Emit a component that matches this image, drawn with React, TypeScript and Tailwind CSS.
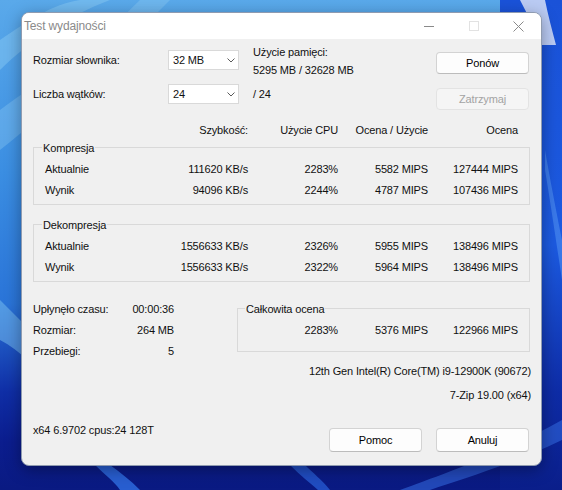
import React from "react";

const Chevron = () => (
  <svg width="8" height="5" viewBox="0 0 8 5">
    <path d="M0.5 0.5 L4 4 L7.5 0.5" fill="none" stroke="#5a5a5a" strokeWidth="1" />
  </svg>
);

function Combo({ value }: { value: string }) {
  return (
    <div className="w-[71px] h-[20px] bg-white border border-[#d9d9d9] flex items-center justify-between pl-[4px] pr-[3px]">
      <span className="leading-[18px]">{value}</span>
      <Chevron />
    </div>
  );
}

function Btn({ children, disabled, tall }: { children: React.ReactNode; disabled?: boolean; tall?: boolean }) {
  return (
    <div
      className={
        "w-[93px] rounded-[4px] border flex items-center justify-center " +
        (tall ? "h-[24px] " : "h-[22px] ") +
        (disabled
          ? "border-[#e3e3e3] bg-[#f5f5f5] text-[#a3a3a3]"
          : "border-[#d3d3d3] border-b-[#bcbcbc] bg-[#fdfdfd] text-black")
      }
    >
      {children}
    </div>
  );
}

function Row({ label, vals }: { label: string; vals: string[] }) {
  return (
    <div className="flex h-[21px] items-center pl-[11px] leading-[18px]">
      <span className="w-[113px]">{label}</span>
      {vals.map((v, i) => (
        <span key={i} className="w-[90px] text-right">
          {v}
        </span>
      ))}
    </div>
  );
}

function Group({ title, children }: { title: string; children: React.ReactNode }) {
  return (
    <div className="relative border border-[#d9d9d9] pt-[10px] pb-[4px]">
      <span className="absolute left-[8px] -top-[7px] px-[1px] bg-[#f0f0f0] leading-[14px]">{title}</span>
      {children}
    </div>
  );
}

function Wallpaper() {
  return (
    <svg className="absolute inset-0" width="562" height="490" viewBox="0 0 562 490">
      <defs>
        <linearGradient id="bgv" x1="0" y1="0" x2="0" y2="1">
          <stop offset="0" stopColor="#5aa9ea" />
          <stop offset="0.35" stopColor="#3b8ee2" />
          <stop offset="0.62" stopColor="#2a74d8" />
          <stop offset="0.8" stopColor="#0f2ea6" />
          <stop offset="0.9" stopColor="#0b1d8e" />
          <stop offset="1" stopColor="#0a1a82" />
        </linearGradient>
        <linearGradient id="rgt" x1="0" y1="0" x2="0" y2="1">
          <stop offset="0" stopColor="#1a52d8" />
          <stop offset="0.5" stopColor="#1c5ae0" />
          <stop offset="0.8" stopColor="#0e2ca6" />
          <stop offset="1" stopColor="#0a1e8a" />
        </linearGradient>
      </defs>
      <rect width="562" height="490" fill="url(#bgv)" />
      <rect x="500" width="62" height="490" fill="url(#rgt)" />
      <path d="M0 40 C 30 20, 50 5, 80 0 L 110 0 C 70 15, 30 40, 0 70 Z" fill="#8ccbf3" opacity="0.45" />
      <path d="M0 110 C 40 80, 80 60, 140 0 L 170 0 C 110 60, 50 110, 0 150 Z" fill="#9ad4f6" opacity="0.3" />
      <path d="M0 300 C 20 320, 40 340, 60 360 L 60 400 C 40 370, 20 350, 0 340 Z" fill="#7cc2f0" opacity="0.5" />
      <path d="M520 0 L 545 0 C 548 15, 552 30, 556 45 L 540 45 C 535 30, 528 15, 520 0 Z" fill="#ffffff" opacity="0.7" />
      <path d="M545 150 C 552 190, 558 220, 562 240 L 562 280 C 556 240, 550 200, 545 170 Z" fill="#4f8df0" opacity="0.6" />
      <path d="M95 465 C 105 475, 115 482, 120 490 L 140 490 C 130 480, 120 472, 110 465 Z" fill="#2f6fe4" opacity="0.8" />
      <path d="M290 465 C 300 475, 310 483, 318 490 L 330 490 C 322 480, 312 472, 305 465 Z" fill="#2a62dc" opacity="0.7" />
      <path d="M400 490 C 440 475, 500 455, 562 420 L 562 440 C 510 465, 460 480, 430 490 Z" fill="#3268dc" opacity="0.6" />
    </svg>
  );
}

export default function App() {
  return (
    <div className="relative w-[562px] h-[490px] overflow-hidden font-['Liberation_Sans',Arial,sans-serif] text-[11px] tracking-[-0.15px] text-[#111111]">
      <Wallpaper />
      <div className="relative pt-[12px] pl-[21px]">
        <div className="w-[521px] rounded-[8px] overflow-hidden border border-[#8f9bb0] shadow-[0_4px_16px_rgba(0,0,0,0.35)] bg-[#f0f0f0]">
          {/* Title bar */}
          <div className="h-[26px] bg-white flex items-center">
            <span className="pl-[2px] flex-1 text-[12px] text-[#8a8a8a]">Test wydajności</span>
            <div className="w-[45px] h-[26px] flex items-center justify-center">
              <div className="w-[10px] h-[1px] bg-[#8a8a8a]" />
            </div>
            <div className="w-[45px] h-[26px] flex items-center justify-center">
              <div className="w-[10px] h-[10px] border border-[#e2e2e2]" />
            </div>
            <div className="w-[45px] h-[26px] flex items-center justify-center">
              <svg width="11" height="11" viewBox="0 0 11 11">
                <path d="M0.5 0.5 L10.5 10.5 M10.5 0.5 L0.5 10.5" stroke="#8a8a8a" strokeWidth="1" />
              </svg>
            </div>
          </div>

          {/* Client */}
          <div className="px-[11px] pt-[4px] pb-[13px]">
            {/* Row 1 */}
            <div className="flex items-start h-[41px] pr-[1px]">
              <span className="w-[135px] mt-[8px] leading-[18px]">Rozmiar słownika:</span>
              <div className="mt-[7px]">
                <Combo value="32 MB" />
              </div>
              <div className="flex-1 ml-[14px] leading-[18px]">
                <div>Użycie pamięci:</div>
                <div>5295 MB / 32628 MB</div>
              </div>
              <div className="mt-[9px]">
                <Btn>Ponów</Btn>
              </div>
            </div>
            {/* Row 2 */}
            <div className="flex items-start pr-[1px]">
              <span className="w-[135px] mt-[1px] leading-[18px]">Liczba wątków:</span>
              <Combo value="24" />
              <span className="flex-1 ml-[14px] mt-[1px] leading-[18px]">/ 24</span>
              <div className="mt-[4px]">
                <Btn disabled>Zatrzymaj</Btn>
              </div>
            </div>

            {/* Header */}
            <div className="flex mt-[11px] leading-[18px]">
              <span className="w-[125px]" />
              <span className="w-[90px] text-right">Szybkość:</span>
              <span className="w-[90px] text-right">Użycie CPU</span>
              <span className="w-[90px] text-right">Ocena / Użycie</span>
              <span className="w-[90px] text-right">Ocena</span>
            </div>

            <div className="mt-[8px]">
              <Group title="Kompresja">
                <Row label="Aktualnie" vals={["111620 KB/s", "2283%", "5582 MIPS", "127444 MIPS"]} />
                <Row label="Wynik" vals={["94096 KB/s", "2244%", "4787 MIPS", "107436 MIPS"]} />
              </Group>
            </div>
            <div className="mt-[19px]">
              <Group title="Dekompresja">
                <Row label="Aktualnie" vals={["1556633 KB/s", "2326%", "5955 MIPS", "138496 MIPS"]} />
                <Row label="Wynik" vals={["1556633 KB/s", "2322%", "5964 MIPS", "138496 MIPS"]} />
              </Group>
            </div>

            {/* Bottom section */}
            <div className="flex items-start">
              <div className="w-[204px] mt-[16px] flex flex-col">
                {[
                  ["Upłynęło czasu:", "00:00:36"],
                  ["Rozmiar:", "264 MB"],
                  ["Przebiegi:", "5"],
                ].map(([l, v]) => (
                  <div key={l} className="w-[141px] h-[21px] flex items-center justify-between leading-[18px]">
                    <span>{l}</span>
                    <span>{v}</span>
                  </div>
                ))}
              </div>
              <div className="flex-1 flex flex-col">
                <div className="mt-[26px] relative border border-[#d9d9d9] pt-[10px] pb-[11px]">
                  <span className="absolute left-[7px] -top-[7px] px-[1px] bg-[#f0f0f0] leading-[14px]">Całkowita ocena</span>
                  <div className="flex h-[21px] items-center leading-[18px] pl-[10px]">
                    <span className="w-[90px] text-right">2283%</span>
                    <span className="w-[90px] text-right">5376 MIPS</span>
                    <span className="w-[90px] text-right">122966 MIPS</span>
                  </div>
                </div>
                <div className="mt-[10px] mr-[-1px] text-right leading-[18px]">12th Gen Intel(R) Core(TM) i9-12900K (90672)</div>
                <div className="mt-[6px] mr-[-1px] text-right leading-[18px]">7-Zip 19.00 (x64)</div>
              </div>
            </div>

            {/* Footer */}
            <div className="flex items-start mt-[17px] pr-[1px]">
              <span className="flex-1 leading-[18px]">x64 6.9702 cpus:24 128T</span>
              <div className="mt-[7px] flex gap-[14px]">
                <Btn tall>Pomoc</Btn>
                <Btn tall>Anuluj</Btn>
              </div>
            </div>
          </div>
        </div>
      </div>
    </div>
  );
}
